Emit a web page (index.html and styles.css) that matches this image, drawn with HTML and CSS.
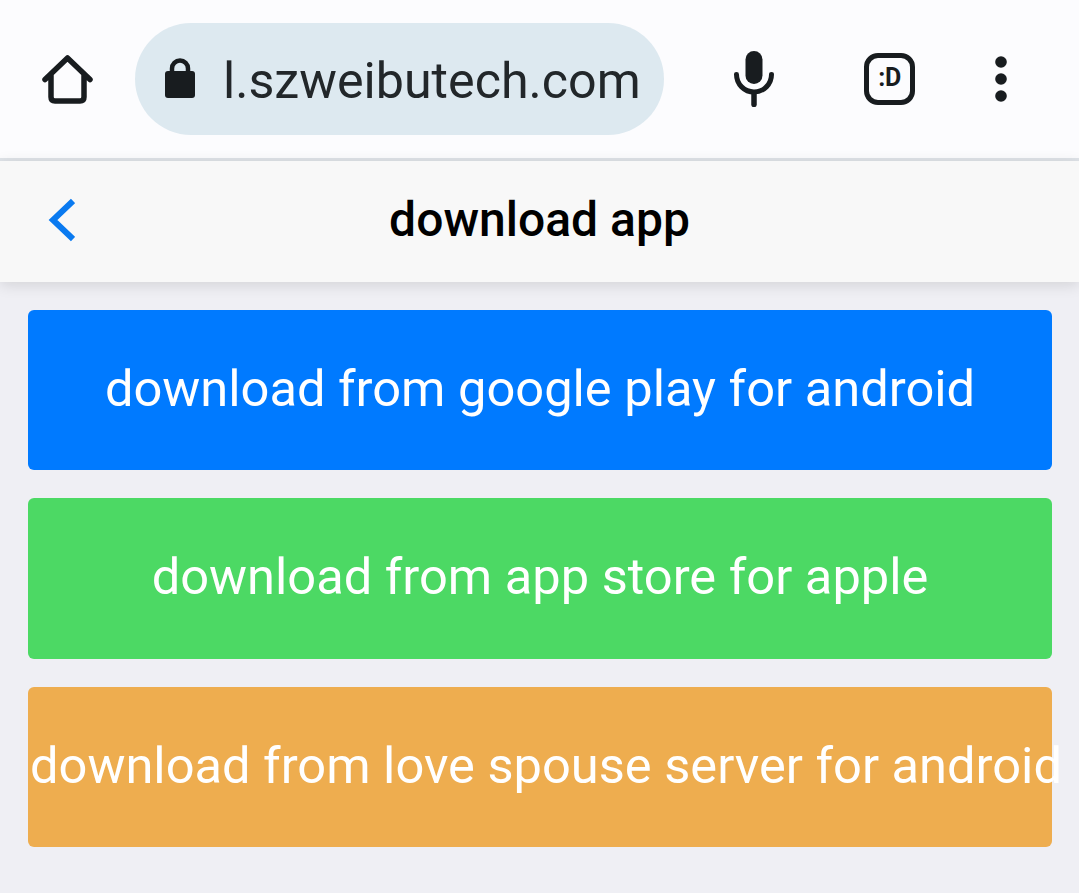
FILE: index.html
```html
<!DOCTYPE html>
<html>
<head lang="en">
    <meta charset="UTF-8">
    <title>download app</title>
    <link rel="stylesheet" href="styles.css">
</head>
<body>

<div class="browser-bar">
    <svg class="icon-home" width="54" height="54" viewBox="0 0 54 54">
        <path d="M4 27.5 L26.5 6 L49 27.5 M10 23 V45 Q10 49 14 49 H39 Q43 49 43 45 V23" fill="none" stroke="#181c1f" stroke-width="5.5" stroke-linecap="round" stroke-linejoin="round"/>
    </svg>
    <div class="url-box">
        <svg class="icon-lock" width="30" height="40" viewBox="0 0 30 40">
            <path d="M7 16 V10.5 A8 8 0 0 1 23 10.5 V16" fill="none" stroke="#181c1f" stroke-width="4.5"/>
            <rect x="0" y="13" width="30" height="27" rx="3" fill="#181c1f"/>
        </svg>
        <span class="url-text">l.szweibutech.com</span>
    </div>
    <svg class="icon-mic" width="40" height="56" viewBox="0 0 40 56">
        <rect x="11.5" y="0" width="17" height="33" rx="8.5" fill="#181c1f"/>
        <path d="M2.5 23.5 A17.5 17.5 0 0 0 37.5 23.5" fill="none" stroke="#181c1f" stroke-width="5" stroke-linecap="round"/>
        <path d="M20 43 V53.5" fill="none" stroke="#181c1f" stroke-width="5.5" stroke-linecap="round"/>
    </svg>
    <div class="tab-face">:D</div>
    <svg class="icon-more" width="12" height="48" viewBox="0 0 12 48">
        <circle cx="6" cy="7" r="5.8" fill="#181c1f"/>
        <circle cx="6" cy="24" r="5.8" fill="#181c1f"/>
        <circle cx="6" cy="41" r="5.8" fill="#181c1f"/>
    </svg>
</div>

<div class="nav-bar">
    <a class="nav-back" href="javascript:void(0);">
        <svg width="28" height="44" viewBox="0 0 28 44">
            <path d="M26 3 L6 22 L26 41" fill="none" stroke="#0a7af0" stroke-width="6"/>
        </svg>
    </a>
    <div class="nav-title">download app</div>
</div>

<div class="content">
    <a class="btn btn-blue" href="javascript:void(0);">download from google play for android</a>
    <a class="btn btn-green" href="javascript:void(0);">download from app store for apple</a>
    <a class="btn btn-orange" href="javascript:void(0);">download from love spouse server for android</a>
</div>

</body>
</html>
```

FILE: styles.css
```css
html, body {
    margin: 0;
    padding: 0;
}

body {
    min-height: 893px;
    background: #efeff4;
    font-family: Roboto, "Liberation Sans", sans-serif;
    overflow-x: hidden;
}

a {
    text-decoration: none;
}

.browser-bar {
    display: flex;
    align-items: center;
    height: 158px;
    background: #fcfcfe;
    border-bottom: 3px solid #dfe3e8;
}

.icon-home {
    margin-left: 41px;
    flex: none;
}

.url-box {
    display: flex;
    align-items: center;
    width: 529px;
    height: 112px;
    margin-left: 40px;
    box-sizing: border-box;
    padding-left: 30px;
    background: #dde9f0;
    border-radius: 56px;
    flex: none;
}

.url-text {
    margin-left: 28px;
    margin-top: 2px;
    font-size: 50.2px;
    color: #22272a;
    white-space: nowrap;
}

.icon-lock {
    flex: none;
    margin-top: -2px;
}

.icon-mic {
    margin-left: 70px;
    flex: none;
}

.tab-face {
    width: 51px;
    height: 52px;
    margin-left: 90px;
    box-sizing: border-box;
    border: 5.5px solid #181c1f;
    border-radius: 14px;
    font-size: 25px;
    font-weight: 700;
    letter-spacing: -0.5px;
    line-height: 40px;
    text-align: center;
    color: #181c1f;
    flex: none;
}

.icon-more {
    margin-left: 80px;
    flex: none;
}

.nav-bar {
    position: relative;
    height: 121px;
    background: #f8f8f8;
    box-shadow: 0 3px 14px rgba(0, 0, 0, 0.12);
    text-align: center;
}

.nav-title {
    font-size: 48px;
    font-weight: 500;
    line-height: 117px;
    color: #000000;
}

.nav-back {
    position: absolute;
    left: 47px;
    top: 37px;
}

.content {
    display: flex;
    flex-direction: column;
    gap: 28.2px;
    padding: 28px 27px 0 28px;
}

.btn {
    display: block;
    box-sizing: border-box;
    height: 160.3px;
    padding: 0 2px;
    border-radius: 6px;
    font-size: 50.6px;
    line-height: 157px;
    text-align: center;
    white-space: nowrap;
    color: #ffffff;
}

.btn-blue {
    background: #007aff;
}

.btn-green {
    background: #4cd964;
}

.btn-orange {
    background: #eead4f;
}
```
